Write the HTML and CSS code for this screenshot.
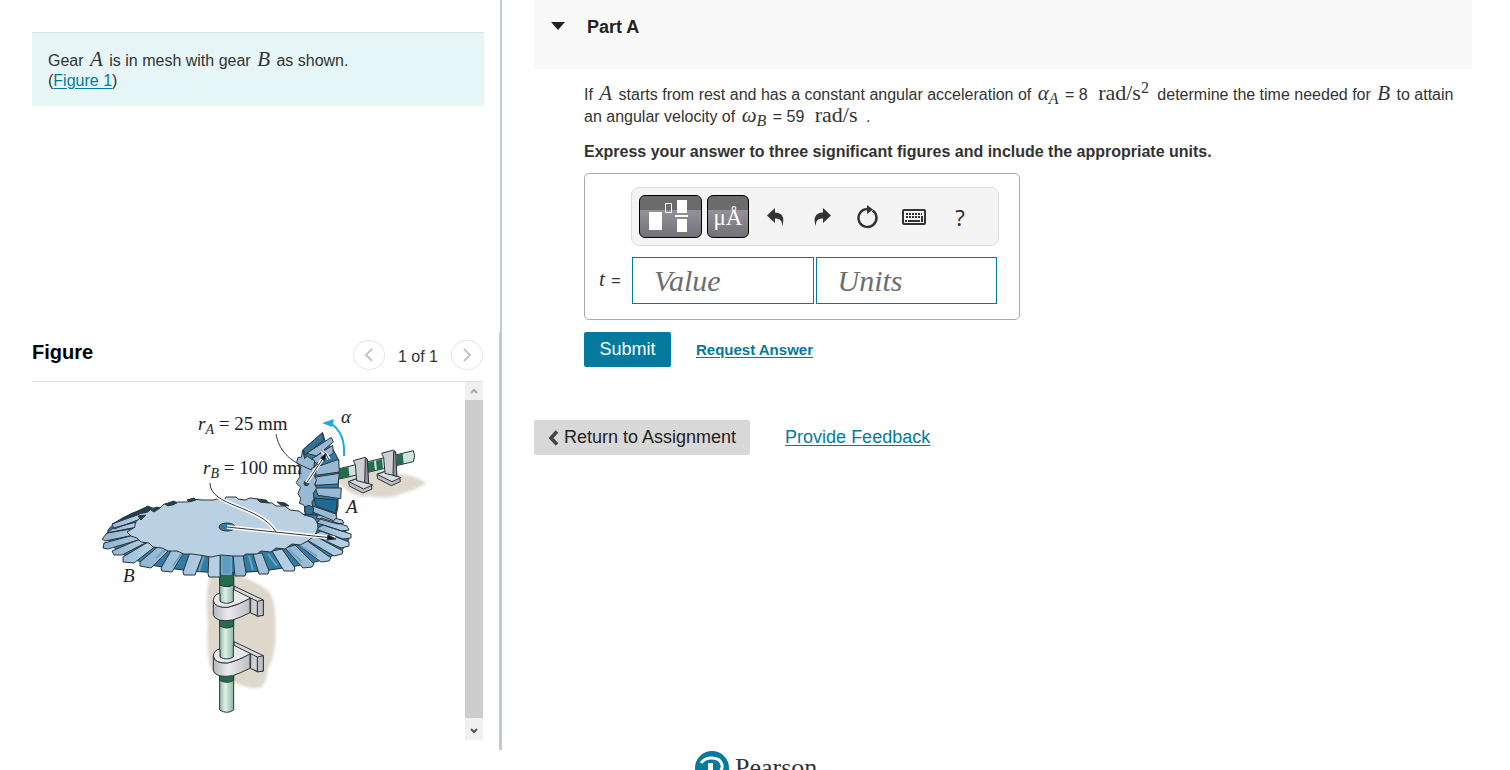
FILE: index.html
```html
<!DOCTYPE html>
<html lang="en">
<head>
    <meta charset="UTF-8">
    <meta name="viewport" content="width=device-width, initial-scale=1.0">
    <title>Part A - Gear Assignment</title>
    <link rel="stylesheet" href="styles.css">
</head>
<body>
    <div class="page">
        <aside class="sidebar">
            <div class="intro-pane">
                <div class="intro">
                    Gear <i class="math">A</i> is in mesh with gear <i class="math">B</i> as shown.<br>
                    (<a href="#figure">Figure 1</a>)
                </div>
            </div>
            <section class="figure-pane" id="figure">
                <div class="figure-header">
                    <h2>Figure</h2>
                    <div class="pager">
                        <button class="pager-btn" aria-label="Previous figure">
                            <svg width="10" height="16" viewBox="0 0 10 16"><path d="M8 2 2 8l6 6"/></svg>
                        </button>
                        <span>1 of 1</span>
                        <button class="pager-btn" aria-label="Next figure">
                            <svg width="10" height="16" viewBox="0 0 10 16"><path d="M2 2l6 6-6 6"/></svg>
                        </button>
                    </div>
                </div>
                <div class="figure-body">
                    <svg class="drawing" width="433" height="358" viewBox="32 382 433 358">
                        <defs>
                            <linearGradient id="shaft"><stop offset="0" stop-color="#8fb8a6"/><stop offset=".4" stop-color="#e0f2e9"/><stop offset="1" stop-color="#8db5a4"/></linearGradient>
                            <linearGradient id="metal"><stop offset="0" stop-color="#b5b6bb"/><stop offset=".4" stop-color="#ebebee"/><stop offset="1" stop-color="#bcbdc2"/></linearGradient>
                            <linearGradient id="tooth" x1="0" y1="0" x2="1" y2="0"><stop offset="0" stop-color="#8fb4d0"/><stop offset="1" stop-color="#b8d3e6"/></linearGradient>
                            <filter id="soft"><feGaussianBlur stdDeviation="5"/></filter>
                        </defs>
                        <!-- vertical shaft and its brackets -->
                        <g transform="translate(180 560) scale(.3333)" class="ink">
                            <path class="shade" d="M92 40Q74 100 84 190Q78 270 92 325Q130 350 160 365Q210 390 242 382Q260 370 262 330Q290 280 286 210Q290 120 262 90Q220 60 165 42z"/>
                            <path fill="url(#shaft)" d="M119 38h42v412q-20 14-42 0z"/>
                            <path class="green" d="M119 30h42v45q-20 10-42 0zM119 180h42v18q-20 12-42 0zM119 345h42v16q-20 12-42 0z"/>
                            <g id="bracket">
                                <path fill="#d9dade" d="M162 78l88 42v46l-20 2-65-45z"/>
                                <path fill="#bfc0c5" d="M232 124l18-4v46l-18 3z"/>
                                <path fill="url(#metal)" d="M100 120q2 22 40 22q30-4 70-28v44q-32 16-52 22q-48 8-58-14z"/>
                                <path fill="#e8e8eb" d="M100 122q2-20 20-22v24q20 12 40 0V88l52 26q-35 20-68 28q-40 2-44-20z"/>
                                <path d="M212 114v45l20 8v-43z" fill="#cfd0d4"/>
                            </g>
                            <use href="#bracket" y="167"/>
                        </g>
                        <!-- shaft of gear A -->
                        <g transform="translate(270 400) scale(.3333)" class="ink">
                            <path class="shade" d="M200 240Q250 300 300 288Q360 300 400 278Q440 270 468 250Q440 225 385 222L280 200z"/>
                            <path fill="#cfe5dc" d="M200 208L430 152q8 14 0 33L204 238z"/>
                            <path class="green" d="M203 208l32-8 4 31-36 7zM292 188l20-5 3 29-22 5zM380 165l18-4 3 30-20 5zM318 182l18-5 3 29-18 4z" stroke="none"/>
                            <g id="post">
                                <path fill="#bdbec3" d="M236 245l22-8 46 18 2 12-27 12-41-21z"/>
                                <path fill="#d9dade" d="M236 245l22-8 50 18-27 12z"/>
                                <path fill="#cfd0d5" d="M250 182l36-10 6 6 2 72-26-6-8-2-4-48z"/>
                                <path fill="#909199" d="M286 176l6 2 4 73-12-3z"/>
                            </g>
                            <use href="#post" x="85" y="-22"/>
                        </g>
                        <!-- gear B: skirt, teeth, face -->
                        <g class="gear-b">
                            <path class="dark" d="M108 530Q116 518 146 508L317 515Q346 524 349 538Q346 558 296 566Q226 580 156 566Q104 554 108 530z"/>
                            <path class="night" d="M112 524L140 510l8-4 4 2-22 13z"/>
                            <g class="teeth">
                                <path d="M112 524l28-10 3 4-29 11zM113 528l24-6v5l-30 6zM137 528l-30 5-5 6 3 2 34-7z"/>
                                <path d="M138 534l-34 9-1 5 5 1 34-10zM142 538l-30 13 2 4 8 0 27-14zM148 542l-25 15 0 5 11 1 23-18z"/>
                                <path d="M160 545l-20 17 0 4 11 2 19-19zM172 549l-11 19 1 3 10 1 12-20zM190 552l-7 20 1 3 11 0 8-21zM209 554l-1 20 1 3 11 0V555z"/>
                                <path d="M233 555l2 21 10 0 1-3-3-18zM253 554l6 20 9 0 1-3-7-18zM272 551l12 20 10 0 1-3-13-19z"/>
                                <path d="M285 548l18 20 9-1 2-3-19-19zM297 544l24 18 8-1 2-3-25-18zM307 540l27 16 8-2 1-3-28-15zM313 535l28 13 8-2 0-4-28-11z"/>
                                <path d="M316 529l27 10 8-1 0-4-28-9zM317 523l25 8 7-1-2-4-26-8zM316 518l22 6 6-1-2-3-23-6z"/>
                            </g>
                            <path class="streak" d="M166 549l-10 9M182 553l-9 13M204 556l-5 15M249 556l4 14M268 554l9 12M289 550l13 12M301 546l16 10M222 555v19h9v-19z"/>
                            <path class="face" d="M135 527Q134 521 142 517l-4-3 10-2 4-4 8 0 4-4 9 1 4-3 11 0 4-3 10 1 12 0 2-1 9 0 1-2 10 0 2 2 7 1 5-2 8 1 4 3 10 1 4 3 9 0 5 4 9 1 5 4 8 2Q318 520 318 528Q316 538 300 545l-8-1-7 5-9-1-5 4-10-1-4 3-11 0-3 2-9 0-13-1-10 2-12-2-7-1-8 0-7-3-9 0-6-3-9-1-4-4-8-1-4-4-6-2-4-4z"/>
                            <path class="night" d="M165 504l9-3 3 2-9 3zM187 500l7-2 2 2-7 2zM257 499l9 1 3 3-9-1zM277 502l8 1 4 3-8-1zM151 510l6-3 3 1-6 4zM138 516l8-1-5 5z"/>
                            <ellipse class="dark" cx="227" cy="527" rx="8" ry="4"/>
                            <path class="halo" d="M227 527l108 11M210 483c0 24 50 22 66 49"/>
                            <path class="lead" d="M227 527l106 11M210 483c0 24 50 22 66 49"/>
                            <path d="M328 535l8 4-9 1z" fill="#111"/>
                        </g>
                        <!-- gear A -->
                        <g transform="translate(270 400) scale(.3333)" class="ink gear-a">
                            <path class="dark" d="M100 150L158 98l6 22 26 30 16 30-2 140-8 36-92-20z"/>
                            <path fill="#2e7396" d="M100 148l57-50 4 22-56 46z"/>
                            <path class="light" d="M110 160l74-48 6 14-50 42zM124 178l64-42 2 24-50 30zM136 202l70-24 2 38-70 10zM132 232l76-12-4 32-68 4zM136 264l78 0-2 32-68-10z"/>
                            <path fill="#1f6a92" d="M132 294l70 6-4 40-60-22z"/>
                            <path class="light" d="M128 318l70 24 2 12-10 8-62-26z"/>
                            <path class="light" d="M98 150L104 176 112 168 122 176 134 182 132 200 140 210 132 226 140 240 134 254 140 264 130 280 132 296 126 306 128 322 116 320 108 328 100 314 88 310 92 296 84 280 92 262 78 248 90 230 86 214 92 202 80 188 84 172 94 172z"/>
                            <circle cx="109" cy="250" r="7" fill="#24516b"/>
                            <path class="halo" d="M110 248l56-84M155 152q16 12 22 26"/>
                            <path d="M110 248l54-80M154 150q18 12 23 30M122 208l22-16" fill="none"/>
                            <path d="M168 160l-4 22-12-8z" fill="#111"/>
                            <path d="M105 342v-22l12-4 14 8-2 20z" fill="#2e7396"/>
                        </g>
                        <path class="lead" d="M276 434c3 16 12 27 36 36"/>
                        <!-- rotation arrow -->
                        <path d="M344 456c1-15-4-27-14-33" fill="none" stroke="#1ba8ea" stroke-width="2"/>
                        <path d="M322 423l12-4-2 8z" fill="#1ba8ea"/>
                        <g class="labels">
                            <text x="198" y="430"><tspan class="it">r</tspan><tspan class="it sub" dy="4">A</tspan><tspan dy="-4"> = 25 mm</tspan></text>
                            <text x="203" y="474"><tspan class="it">r</tspan><tspan class="it sub" dy="4">B</tspan><tspan dy="-4"> = 100 mm</tspan></text>
                            <text x="341" y="423" class="it">α</text>
                            <text x="346" y="513" class="it">A</text>
                            <text x="123" y="582" class="it">B</text>
                        </g>
                    </svg>
                    <div class="scrollbar">
                        <div class="scroll-up"><svg width="8" height="6" viewBox="0 0 8 6"><path d="M1 5l3-3 3 3"/></svg></div>
                        <div class="scroll-thumb"></div>
                        <div class="scroll-down"><svg width="8" height="6" viewBox="0 0 8 6"><path d="M1 1l3 3 3-3"/></svg></div>
                    </div>
                </div>
            </section>
        </aside>

        <main class="content">
            <header class="part-header">
                <svg width="14" height="8" viewBox="0 0 14 8"><path d="M0 0h14L7 8z" fill="#222"/></svg>
                <h1>Part A</h1>
            </header>
            <div class="part-body">
                <p class="question">If <i class="math">A</i> starts from rest and has a constant angular acceleration of <i class="math">α<sub>A</sub></i> = 8 <span class="math unit">rad/s<sup>2</sup></span> determine the time needed for <i class="math">B</i> to attain an angular velocity of <i class="math">ω<sub>B</sub></i> = 59 <span class="math unit">rad/s</span> .</p>
                <p class="instructions">Express your answer to three significant figures and include the appropriate units.</p>

                <form class="answer" id="answer">
                    <div class="toolbar">
                        <button type="button" class="tool-dark tool-templates" aria-label="Templates">
                            <svg width="61" height="41" viewBox="0 0 61 41">
                                <g fill="#fff"><path d="M9 16h13v18H9zM37 4h10v13H37zM35 19h13v2H35zM37 23h10v13H37z"/></g>
                                <path d="M25.500 7.500h6v9h-6z" fill="none" stroke="#fff"/>
                            </svg>
                        </button>
                        <button type="button" class="tool-dark tool-symbols" aria-label="Symbols">μÅ</button>
                        <button type="button" class="tool" aria-label="Undo">
                            <svg width="20" height="20" viewBox="0 0 20 20"><path d="M1 8.500L9 1v4.500c7 0 10.500 5 7 14 .5-5.500-1.500-8-7-8V16z"/></svg>
                        </button>
                        <button type="button" class="tool" aria-label="Redo">
                            <svg width="20" height="20" viewBox="0 0 20 20"><path d="M19 8.500L11 1v4.500c-7 0-10.500 5-7 14-.5-5.500 1.500-8 7-8V16z"/></svg>
                        </button>
                        <button type="button" class="tool" aria-label="Reset">
                            <svg width="22" height="24" viewBox="0 0 22 24"><path d="M15.500 5.500A9 9 0 1 1 10 4" fill="none" stroke="#333" stroke-width="2.500"/><path d="M10 0l6 4.500L10 9z"/></svg>
                        </button>
                        <button type="button" class="tool" aria-label="Keyboard">
                            <svg width="24" height="16" viewBox="0 0 24 16"><rect x="1" y="1" width="22" height="14" rx="1" fill="#f4f4f4" stroke="#333" stroke-width="2"/><path d="M4 5h16M4 8h15" fill="none" stroke="#333" stroke-width="2" stroke-dasharray="2 1"/><path d="M3 11h2v2H3zM6 11h12v2H6zM19 7h2v6h-2z"/></svg>
                        </button>
                        <button type="button" class="tool tool-help" aria-label="Help">?</button>
                    </div>
                    <div class="answer-row">
                        <label for="value"><i class="math">t</i> =</label>
                        <input type="text" id="value" placeholder="Value">
                        <input type="text" id="units" placeholder="Units" aria-label="Units">
                    </div>
                </form>

                <div class="actions">
                    <button type="submit" form="answer" class="submit">Submit</button>
                    <a href="#answer" class="request">Request Answer</a>
                </div>
            </div>

            <nav class="bottom-nav">
                <button type="button" class="return">
                    <svg width="11" height="16" viewBox="0 0 11 16"><path d="M9 1.500L3 8l6 6.500" fill="none" stroke="#444" stroke-width="3.500"/></svg>
                    Return to Assignment
                </button>
                <a href="#feedback">Provide Feedback</a>
            </nav>

            <footer class="footer">
                <svg width="34" height="34" viewBox="0 0 34 34">
                    <circle cx="17" cy="17" r="17" fill="#047a9c"/>
                    <path d="M6 12c5-7 19-7 21 2 1 6-4 9-9 9" fill="none" stroke="#fff" stroke-width="3"/>
                    <path d="M13 12h5v16h-5z" fill="#fff"/>
                </svg>
                <span>Pearson</span>
            </footer>
        </main>
    </div>
</body>
</html>
```
FILE: styles.css
```css
* {
    margin: 0;
    padding: 0;
    box-sizing: border-box;
}

body {
    font-family: "Liberation Sans", Arial, sans-serif;
    font-size: 16px;
    color: #333;
    background-color: #fff;
    height: 100vh;
    overflow: hidden;
}

a {
    color: #047a9c;
    text-underline-offset: 2px;
}

button {
    font-family: inherit;
    border: none;
    cursor: pointer;
}

.math {
    margin: 0 2px;
    font-family: "Liberation Serif", "Times New Roman", serif;
    font-size: 21px;
    line-height: 0;
}

.math sub,
.math sup {
    font-size: 16px;
    line-height: 0;
}

.math sub {
    vertical-align: -4px;
}

.math sup {
    vertical-align: 7px;
}

.page {
    display: grid;
    grid-template-columns: 502px 1fr;
    grid-template-rows: 100vh;
}

/* left side */
.sidebar {
    display: flex;
    flex-direction: column;
    margin-bottom: 20px;
}

.intro-pane {
    height: 332px;
    padding: 32px 16px 0 32px;
    border-right: 2px solid #bccbde;
}

.intro {
    padding: 18px 16px 15px;
    line-height: 20px;
    background-color: #e6f6f6;
    border-top: 1px solid #d8e0e0;
}

.figure-pane {
    flex: 1;
    display: flex;
    flex-direction: column;
    padding: 0 16px 10px 32px;
    border-right: 3px solid #bccbde;
}

.figure-header {
    display: flex;
    justify-content: space-between;
    height: 50px;
    padding-top: 8px;
    border-bottom: 1px solid #ddd;
}

.figure-header h2 {
    font-size: 20px;
    line-height: 24px;
    color: #000;
}

.pager {
    display: flex;
    gap: 13px;
    line-height: 34px;
}

.pager-btn {
    display: flex;
    align-items: center;
    justify-content: center;
    width: 32px;
    height: 30px;
    background-color: #fff;
    border: 1px solid #e4e4e4;
    border-radius: 50%;
}

.pager-btn path {
    fill: none;
    stroke: #c4c4c4;
    stroke-width: 2;
}

.figure-body {
    flex: 1;
    display: flex;
    justify-content: space-between;
}

.scrollbar {
    display: flex;
    flex-direction: column;
    width: 18px;
}

.scroll-up,
.scroll-down {
    display: flex;
    align-items: center;
    justify-content: center;
    height: 18px;
    background-color: #f0f0f0;
}

.scroll-down {
    height: 22px;
    padding-top: 4px;
}

.scroll-up path,
.scroll-down path {
    fill: none;
    stroke: #aaa;
    stroke-width: 2;
}

.scroll-down path {
    stroke: #555;
}

.scroll-thumb {
    flex: 1;
    background-color: #cdcdcd;
}

/* gear drawing */
.ink {
    stroke: #2d3338;
    stroke-width: 3;
    stroke-linejoin: round;
}

.ink .shade {
    fill: #ddd7cc;
    stroke: none;
    filter: url(#soft);
}

.green {
    fill: #246b50;
}

.dark {
    fill: #327ca4;
}

.light {
    fill: #97b9d5;
}

.night {
    fill: #1d4256;
}

.gear-b {
    stroke: #28353f;
    stroke-width: 1;
    stroke-linejoin: round;
}

.teeth {
    fill: url(#tooth);
}

.face {
    fill: #bad0e3;
}

.gear-b .streak {
    fill: #5c9cc0;
    stroke: #6aa6c6;
    stroke-width: 2;
}

.gear-b .halo {
    fill: none;
    stroke: #fff;
    stroke-width: 4;
}

.gear-a .halo {
    fill: none;
    stroke: #fff;
    stroke-width: 10;
}

.lead {
    fill: none;
    stroke: #333;
    stroke-width: 1;
}

.labels {
    font-family: "Liberation Serif", "Times New Roman", serif;
    font-size: 19px;
    fill: #222;
}

.labels .it {
    font-style: italic;
}

.labels .sub {
    font-size: 14px;
}

/* right side */
.content {
    padding: 0 38px 0 32px;
}

.part-header {
    display: flex;
    gap: 22px;
    height: 69px;
    padding: 16px 17px;
    background-color: #f9f9f9;
}

.part-header svg {
    margin-top: 6px;
}

.part-header h1 {
    font-size: 18px;
    line-height: 22px;
    color: #222;
}

.part-body {
    padding: 15px 0 0 50px;
}

.question {
    line-height: 22px;
}

.unit {
    margin: 0 4px 0 6px;
    font-size: 22px;
}

.instructions {
    margin-top: 14px;
    line-height: 20px;
    font-weight: bold;
}

.answer {
    width: 436px;
    margin-top: 11px;
    padding: 13px 20px 15px 14px;
    border: 1px solid #aaa;
    border-radius: 5px;
}

.toolbar {
    display: flex;
    align-items: center;
    height: 59px;
    margin-left: 32px;
    padding: 0 7px;
    background-color: #f4f4f4;
    border: 1px solid #ddd;
    border-radius: 8px;
}

.tool-dark {
    height: 43px;
    margin-right: 5px;
    color: #fff;
    background: linear-gradient(#6b6b6b 0, #6b6b6b 33%, #93929b 34%, #727178 100%);
    border: 1px solid #000;
    border-radius: 6px;
}

.tool-templates {
    width: 63px;
}

.tool-symbols {
    width: 42px;
    margin-right: 4px;
    padding-top: 2px;
    font-family: "Liberation Serif", "Times New Roman", serif;
    font-size: 23px;
}

.tool {
    display: flex;
    align-items: center;
    justify-content: center;
    width: 46px;
    height: 43px;
    color: #333;
    background: none;
}

.tool path {
    fill: #333;
}

.tool path[fill="none"] {
    fill: none;
}

.tool-help {
    font-family: "Noto Sans", sans-serif;
    font-size: 22px;
}

.answer-row {
    display: flex;
    align-items: center;
    gap: 2px;
    margin-top: 11px;
    padding-right: 2px;
}

.answer-row label {
    width: 31px;
}

.answer-row label .math {
    margin-left: 0;
}

.answer-row input {
    flex: 1;
    min-width: 0;
    height: 47px;
    padding: 0 21px;
    font: italic 30px "Liberation Serif", "Times New Roman", serif;
    color: #333;
    border: 1px solid #047a9c;
}

.answer-row input::placeholder {
    color: #6d6d6d;
}

.actions {
    display: flex;
    align-items: center;
    gap: 25px;
    margin-top: 12px;
}

.submit {
    width: 87px;
    height: 35px;
    font-size: 18px;
    color: #fff;
    background-color: #047a9c;
    border-radius: 2px;
}

.request {
    font-size: 15px;
    font-weight: bold;
}

.bottom-nav {
    display: flex;
    align-items: center;
    gap: 35px;
    margin-top: 53px;
    font-size: 18px;
}

.return {
    display: flex;
    align-items: center;
    gap: 5px;
    height: 35px;
    padding: 0 14px;
    font-size: 18px;
    color: #222;
    background-color: #d8d8d8;
    border-radius: 2px;
}

.footer {
    display: flex;
    align-items: center;
    gap: 6px;
    margin-top: 296px;
    padding-left: 161px;
    font-family: "Liberation Serif", "Times New Roman", serif;
    font-size: 26px;
}
```
